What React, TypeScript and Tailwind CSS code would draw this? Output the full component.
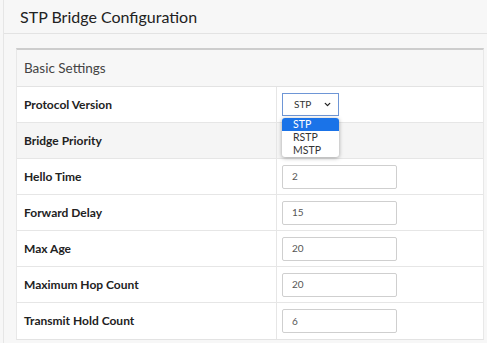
import React from "react";
import { ChevronDown } from "lucide-react";

// Rows of the settings table
interface SettingRow {
  label: string;
  value?: string;
  select?: boolean;
}

const rows: SettingRow[] = [
  { label: "Protocol Version", select: true },
  { label: "Bridge Priority" },
  { label: "Hello Time", value: "2" },
  { label: "Forward Delay", value: "15" },
  { label: "Max Age", value: "20" },
  { label: "Maximum Hop Count", value: "20" },
  { label: "Transmit Hold Count", value: "6" },
];

const options = ["STP", "RSTP", "MSTP"];

export default function App() {
  return (
    <div className="w-[487px] h-[343px] overflow-hidden bg-[#f7f7f7] font-['Lato','Liberation_Sans',sans-serif]">
      <div className="ml-[3px] h-full border-l border-[#e6e6e6]">
        <div className="h-[34px] border-b border-[#e3e3e3] pl-[16px] flex items-center">
          <h1 className="text-[16px] text-[#222]">STP Bridge Configuration</h1>
        </div>

        <div className="mt-[14px] ml-[12px] mr-[3px] border-t-2 border-[#cdcdcd] border-x border-b border-x-[#e8e8e8] border-b-[#e3e3e3]">
          <div className="h-[37px] bg-[#f7f7f7] border-b border-[#e3e3e3] flex items-center pl-[7px]">
            <span className="text-[13.5px] text-[#444]">Basic Settings</span>
          </div>

          {rows.map((row, i) => (
            <div
              key={row.label}
              className={
                "grid grid-cols-[260px_1fr] h-[36px] " +
                (i < rows.length - 1 ? "border-b border-[#e6e6e6] " : "") +
                (i === 1 ? "bg-[#f5f5f5]" : "bg-white")
              }
            >
              <div className="flex items-center pl-[7px] border-r border-[#e6e6e6]">
                <span className="text-[12px] font-bold text-[#222]">{row.label}</span>
              </div>
              <div className="relative flex items-center pl-[5px]">
                {row.select && (
                  <>
                    <div className="w-[57px] h-[23px] border border-[#6e96d6] bg-white flex items-center justify-between pl-[11px] pr-[6px]">
                      <span className="text-[10px] text-[#333]">STP</span>
                      <ChevronDown size={9} strokeWidth={3.5} className="text-[#222]" />
                    </div>
                    <div className="absolute left-[5px] top-[31px] z-10 w-[57px] rounded-[3px] bg-white shadow-[0_1px_4px_rgba(0,0,0,0.35)] overflow-hidden">
                      {options.map((opt, j) => (
                        <div
                          key={opt}
                          className={
                            "h-[13px] pl-[11px] flex items-center text-[10.5px] leading-none " +
                            (j === 0 ? "bg-[#1a73e8] text-white" : "text-[#333]")
                          }
                        >
                          {opt}
                        </div>
                      ))}
                    </div>
                  </>
                )}
                {row.value !== undefined && (
                  <div className="w-[115px] h-[24px] border border-[#cfcfcf] rounded-[2px] bg-white flex items-center pl-[9px]">
                    <span className="text-[10px] text-[#555]">{row.value}</span>
                  </div>
                )}
              </div>
            </div>
          ))}
        </div>
      </div>
    </div>
  );
}
